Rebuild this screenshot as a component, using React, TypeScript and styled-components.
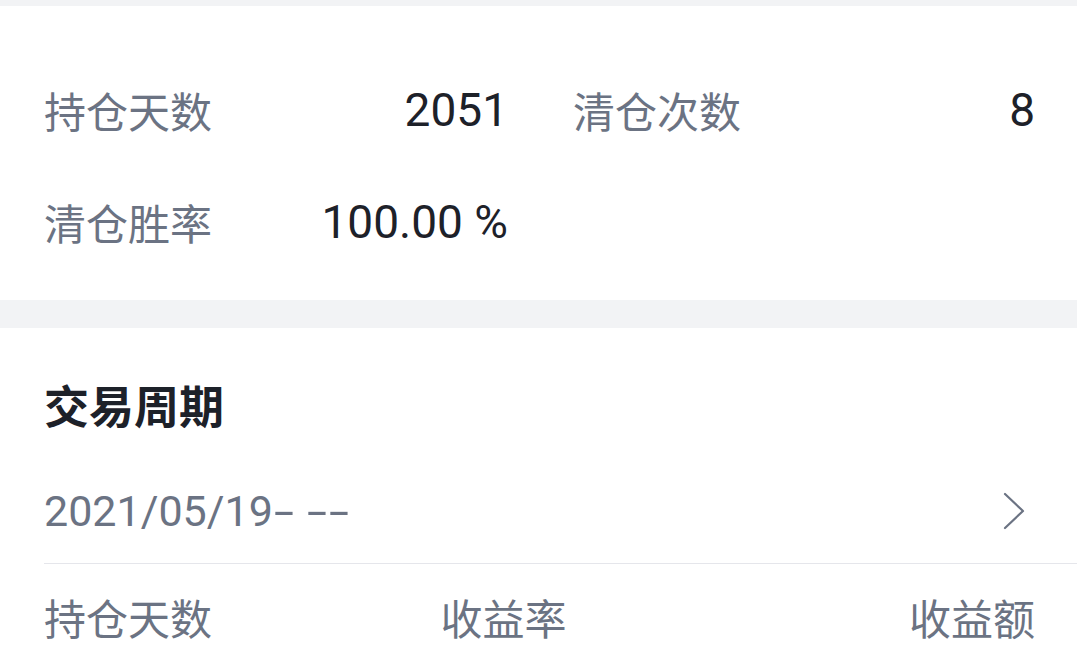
import React from "react";
import styled, { createGlobalStyle } from "styled-components";

const Global = createGlobalStyle`
  html, body { margin: 0; padding: 0; background: #f2f3f5; }
  body { font-family: Roboto, "Noto Sans CJK SC", sans-serif; }
`;

const Page = styled.div`
  padding-top: 6px;
  display: flex;
  flex-direction: column;
  gap: 28px;
  background: #f2f3f5;
`;

const Card = styled.section`
  background: #ffffff;
  padding: 0 42px 0 44px;
`;

const StatsGrid = styled.div`
  display: grid;
  grid-template-columns: 464px 1fr;
  column-gap: 65px;
  padding: 48px 0 22px;
`;

const StatItem = styled.div`
  display: flex;
  align-items: center;
  justify-content: space-between;
  height: 112px;
`;

const Label = styled.span`
  font-family: "Noto Sans CJK SC", sans-serif;
  font-size: 42px;
  line-height: 56px;
  color: #6b7383;
`;

const Value = styled.span`
  font-family: Roboto, sans-serif;
  font-size: 46px;
  line-height: 56px;
  color: #1d2129;
`;

const Title = styled.h2`
  margin: 0;
  padding-top: 47px;
  font-family: "Noto Sans CJK SC", sans-serif;
  font-weight: 700;
  font-size: 45px;
  line-height: 60px;
  color: #1d2129;
`;

const PeriodRow = styled.div`
  display: flex;
  align-items: center;
  justify-content: space-between;
  padding: 48px 42px 24px 0;
  margin-right: -42px;
  border-bottom: 1px solid #e5e6eb;
`;

const PeriodText = styled.span`
  font-family: Roboto, sans-serif;
  font-size: 43px;
  line-height: 56px;
  color: #6b7383;
  white-space: pre;
`;

const Dash = styled.span`
  display: inline-block;
  width: 22px;
  text-align: center;
  transform: scaleX(1.68);
`;

const Chevron = styled.svg`
  width: 22px;
  height: 38px;
  margin-right: 10px;
  display: block;
`;

const HeaderRow = styled.div`
  display: grid;
  grid-template-columns: 40% 30% 30%;
  padding-top: 25px;
  padding-bottom: 20px;
`;

const HeaderCell = styled(Label)<{ $align?: "left" | "right" }>`
  text-align: ${(p) => p.$align ?? "left"};
`;

export default function App() {
  return (
    <>
      <Global />
      <Page>
        <Card>
          <StatsGrid>
            <StatItem>
              <Label>持仓天数</Label>
              <Value>2051</Value>
            </StatItem>
            <StatItem>
              <Label>清仓次数</Label>
              <Value>8</Value>
            </StatItem>
            <StatItem>
              <Label>清仓胜率</Label>
              <Value>100.00 %</Value>
            </StatItem>
          </StatsGrid>
        </Card>
        <Card>
          <Title>交易周期</Title>
          <PeriodRow>
            <PeriodText>
              2021/05/19<Dash>-</Dash> <Dash>-</Dash><Dash>-</Dash>
            </PeriodText>
            <Chevron viewBox="0 0 22 38" fill="none">
              <path d="M2 2 L20 19 L2 36" stroke="#6b7383" strokeWidth="2.2" strokeLinecap="round" strokeLinejoin="round" />
            </Chevron>
          </PeriodRow>
          <HeaderRow>
            <HeaderCell>持仓天数</HeaderCell>
            <HeaderCell>收益率</HeaderCell>
            <HeaderCell $align="right">收益额</HeaderCell>
          </HeaderRow>
        </Card>
      </Page>
    </>
  );
}
